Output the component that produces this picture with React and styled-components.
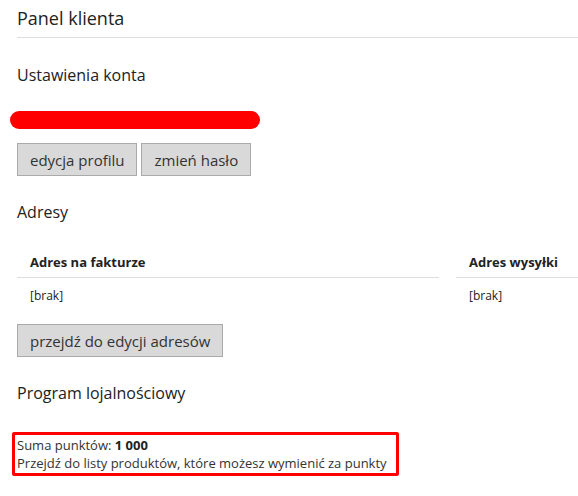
import React from 'react'
import styled, { createGlobalStyle } from 'styled-components'

const GlobalStyle = createGlobalStyle`
    body {
        margin: 0;
        font-family: "Open Sans", "Liberation Sans", sans-serif;
        color: #222;
        background: #fff;
        overflow: hidden;
    }
`

const Page = styled.div`
    padding: 0 0 0 17px;
`

const Title = styled.h1`
    font-size: 18px;
    font-weight: 400;
    margin: 0;
    padding: 6px 0 7px;
    border-bottom: 1px solid #ddd;
    line-height: 24px;
`

const SectionTitle = styled.h2`
    font-size: 16px;
    font-weight: 400;
    margin: ${p => p.$top || 26}px 0 0;
    line-height: 22px;
`

const Redacted = styled.div`
    width: 250px;
    height: 18px;
    background: #ff0000;
    border-radius: 9px;
    margin: 25px 0 0 -7px;
`

const ButtonRow = styled.div`
    display: flex;
    gap: 4px;
    margin-top: ${p => p.$top || 14}px;
`

const Button = styled.button`
    font-family: inherit;
    font-size: 15px;
    color: #333;
    background: #d9d9d9;
    border: 1px solid #aaa;
    border-radius: 0;
    height: 33px;
    padding: 0 12px;
`

const Addresses = styled.div`
    display: grid;
    grid-template-columns: 422px 1fr;
    column-gap: 17px;
    margin-top: 30px;
`

const Column = styled.div`
    display: flex;
    flex-direction: column;
`

const ColHead = styled.div`
    font-size: 13px;
    font-weight: 700;
    padding: 0 13px 6px;
    border-bottom: 1px solid #ddd;
    line-height: 18px;
    white-space: nowrap;
`

const ColCell = styled.div`
    font-size: 12px;
    padding: 9px 13px 0;
    line-height: 17px;
`

const Loyalty = styled.div`
    width: 377px;
    border: 3px solid #f00;
    border-radius: 2px;
    margin: 28px 0 0 -5px;
    padding: 1px 2px;
    font-size: 13px;
    line-height: 18px;
    color: #333;
`

const Strong = styled.b`
    font-weight: 700;
    color: #222;
`

export default function App() {
    return (
        <Page>
            <GlobalStyle />
            <Title>Panel klienta</Title>
            <SectionTitle>Ustawienia konta</SectionTitle>
            <Redacted />
            <ButtonRow>
                <Button>edycja profilu</Button>
                <Button>zmień hasło</Button>
            </ButtonRow>
            <SectionTitle $top={25}>Adresy</SectionTitle>
            <Addresses>
                <Column>
                    <ColHead>Adres na fakturze</ColHead>
                    <ColCell>[brak]</ColCell>
                </Column>
                <Column>
                    <ColHead>Adres wysyłki</ColHead>
                    <ColCell>[brak]</ColCell>
                </Column>
            </Addresses>
            <ButtonRow $top={20}>
                <Button>przejdź do edycji adresów</Button>
            </ButtonRow>
            <SectionTitle $top={25}>Program lojalnościowy</SectionTitle>
            <Loyalty>
                <div>Suma punktów: <Strong>1 000</Strong></div>
                <div>Przejdź do listy produktów, które możesz wymienić za punkty</div>
            </Loyalty>
        </Page>
    )
}
